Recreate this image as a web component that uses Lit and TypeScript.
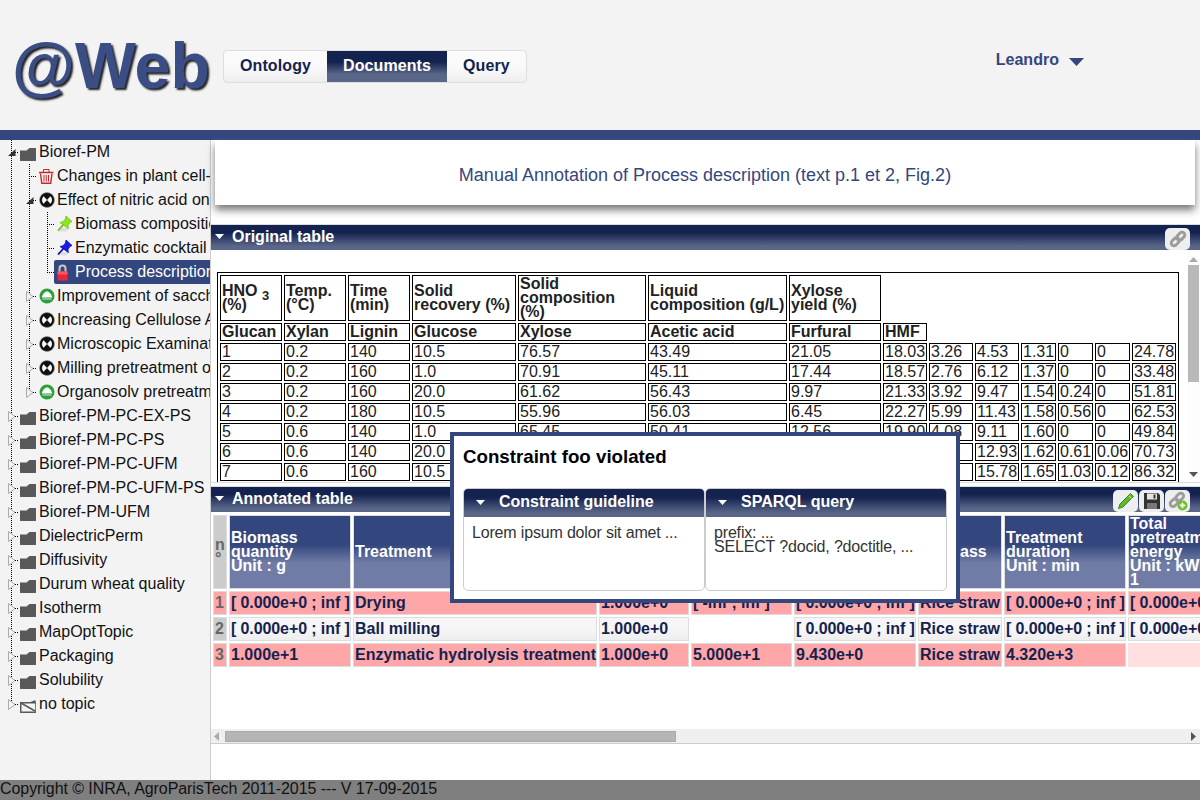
import { LitElement, html, css, svg } from "lit";
import { customElement } from "lit/decorators.js";

type Ico = "folder" | "empty" | "trash" | "hour" | "up" | "pinG" | "pinB" | "lock";
interface Node { d: number; t: string; i: Ico; a?: "open" | "closed"; end?: boolean; sel?: boolean; }

const TREE: Node[] = [
  { d: 0, t: "Bioref-PM", i: "folder", a: "open" },
  { d: 1, t: "Changes in plant cell-wall", i: "trash" },
  { d: 1, t: "Effect of nitric acid on", i: "hour", a: "open" },
  { d: 2, t: "Biomass composition", i: "pinG" },
  { d: 2, t: "Enzymatic cocktail composition", i: "pinB" },
  { d: 2, t: "Process description (text p.1 et 2, Fig.2)", i: "lock", end: true, sel: true },
  { d: 1, t: "Improvement of saccharification", i: "up", a: "closed" },
  { d: 1, t: "Increasing Cellulose Accessibility", i: "hour", a: "closed" },
  { d: 1, t: "Microscopic Examination", i: "hour", a: "closed" },
  { d: 1, t: "Milling pretreatment of", i: "hour", a: "closed" },
  { d: 1, t: "Organosolv pretreatment", i: "up", a: "closed", end: true },
  ...["Bioref-PM-PC-EX-PS", "Bioref-PM-PC-PS", "Bioref-PM-PC-UFM", "Bioref-PM-PC-UFM-PS", "Bioref-PM-UFM", "DielectricPerm", "Diffusivity", "Durum wheat quality", "Isotherm", "MapOptTopic", "Packaging", "Solubility"].map(
    (t): Node => ({ d: 0, t, i: "folder", a: "closed" })
  ),
  { d: 0, t: "no topic", i: "empty", a: "closed", end: true },
];

const ORIG_W = [62, 62, 62, 104, 128, 139, 92, 44, 44, 44, 35, 35, 35, 44];
const ORIG_ROWS = [
  ["1", "0.2", "140", "10.5", "76.57", "43.49", "21.05", "18.03", "3.26", "4.53", "1.31", "0", "0", "24.78"],
  ["2", "0.2", "160", "1.0", "70.91", "45.11", "17.44", "18.57", "2.76", "6.12", "1.37", "0", "0", "33.48"],
  ["3", "0.2", "160", "20.0", "61.62", "56.43", "9.97", "21.33", "3.92", "9.47", "1.54", "0.24", "0", "51.81"],
  ["4", "0.2", "180", "10.5", "55.96", "56.03", "6.45", "22.27", "5.99", "11.43", "1.58", "0.56", "0", "62.53"],
  ["5", "0.6", "140", "1.0", "65.45", "50.41", "12.56", "19.90", "4.08", "9.11", "1.60", "0", "0", "49.84"],
  ["6", "0.6", "140", "20.0", "", "", "", "", "", "12.93", "1.62", "0.61", "0.06", "70.73"],
  ["7", "0.6", "160", "10.5", "", "", "", "", "", "15.78", "1.65", "1.03", "0.12", "86.32"],
];
const ANNOT_W = [14, 122, 244, 90, 101, 122, 84, 122, 122];
const RANGE = "[ 0.000e+0 ; inf ]";
const ANNOT_ROWS: { n: string; cls: string; cells: string[] }[] = [
  { n: "1", cls: "bad", cells: [RANGE, "Drying", "1.000e+0", "[ -inf ; inf ]", RANGE, "Rice straw", RANGE, RANGE] },
  { n: "2", cls: "ok", cells: [RANGE, "Ball milling", "1.000e+0", "", RANGE, "Rice straw", RANGE, RANGE] },
  { n: "3", cls: "bad", cells: ["1.000e+1", "Enzymatic hydrolysis treatment", "1.000e+0", "5.000e+1", "9.430e+0", "Rice straw", "4.320e+3", ""] },
];

const caret = html`<svg class="caret" width="9" height="5" viewBox="0 0 9 5"><path d="M0 0H9L4.5 5Z" fill="#fff"/></svg>`;
const chain = svg`<g transform="rotate(-45 8 8)" fill="none" stroke="#9c9c9c" stroke-width="2.6"><rect x="0.5" y="5.5" width="8" height="5" rx="2.5"/><rect x="7.5" y="5.5" width="8" height="5" rx="2.5"/></g>`;
const icoChain = html`<svg width="18" height="18" viewBox="0 0 16 16">${chain}</svg>`;
const icoChainPlus = html`<svg width="20" height="20" viewBox="0 0 18 18">${chain}<circle cx="13" cy="13" r="4.5" fill="#6cc02c"/><path d="M10.500 13H15.500M13 10.500V15.500" stroke="#fff" stroke-width="1.6"/></svg>`;
const icoPencil = html`<svg width="18" height="18" viewBox="0 0 18 18"><path d="M13.5 1.5L16.5 4.5L6 15L1.5 16.5L3 12Z" fill="#62b82e" stroke="#3a8a1e" stroke-width="1"/><path d="M12 4L14.5 6.500" stroke="#c8eda0"/></svg>`;
const icoSave = html`<svg width="18" height="18" viewBox="0 0 18 18"><path d="M1 1H15L17 3V17H1Z" fill="#333"/><rect x="4" y="1.500" width="10" height="6" fill="#e4e4e4"/><rect x="10.500" y="2.500" width="2" height="4" fill="#333"/><rect x="4" y="11" width="10" height="6" fill="#777"/></svg>`;

function icon(i: Ico) {
  switch (i) {
    case "folder":
      return html`<svg class="folder" width="16" height="14" viewBox="0 0 16 14"><path d="M0 3.500H6.500L9.500 1H16V14H0Z" fill="#595959"/></svg>`;
    case "empty":
      return html`<svg class="folder" width="16" height="14" viewBox="0 0 16 14"><path d="M.75 3.750H16V13.250H.75Z" fill="none" stroke="#595959" stroke-width="1.500"/><path d="M1 4L15 12" stroke="#595959" stroke-width="1.500"/><path d="M9 3.500L15.500 1V4Z" fill="#595959"/></svg>`;
    case "trash":
      return html`<svg width="16" height="16" viewBox="0 0 16 16" fill="none" stroke="#c8282a"><path d="M0 4.500H14.500" stroke-width="1.500"/><path d="M4.500 4V1.500H10V4" /><path d="M1.500 5.500L2.800 15.300H11.700L13 5.500" stroke-width="1.400"/><path d="M5 7V13.500M7.250 7V13.500M9.500 7V13.500"/></svg>`;
    case "hour":
      return html`<svg width="16" height="16" viewBox="0 0 16 16"><circle cx="8" cy="8" r="7.500" fill="#111" stroke="#999" stroke-width=".6"/><circle cx="8" cy="8" r="5" fill="#fff"/><path d="M3 2.500H13L8 8L13 13.500H3L8 8Z" fill="#111"/></svg>`;
    case "up":
      return html`<svg width="16" height="16" viewBox="0 0 16 16"><circle cx="8" cy="8" r="7.500" fill="#2c9e3c"/><path d="M2.800 9.500C3.500 6 6 3.600 8 3.600S12.500 6 13.200 9.500Z" fill="#fff"/><path d="M3.500 11H12.500" stroke="#d8f0dc" stroke-width="1"/></svg>`;
    case "pinG":
    case "pinB": {
      const c = i === "pinG" ? "#8ee61e" : "#1a1ae6";
      const d = i === "pinG" ? "#6cc014" : "#0c0cb0";
      return html`<svg width="16" height="16" viewBox="0 0 16 16"><path d="M0 15.500L4 12H13L9 15.500Z" fill="#ddd"/><path d="M7 8L1 14.500" stroke="${d}" stroke-width="1.800"/><path d="M9 0L15 5.500L12.800 6.500L11 9.500L11.300 12.500L3 6.500L6 5.800L8.500 3Z" fill="${c}" stroke="${d}" stroke-width=".8"/></svg>`;
    }
    case "lock":
      return html`<svg width="16" height="17" viewBox="0 0 16 17"><path d="M2.500 8V4.500A3 3 0 0 1 8.500 4.500V8" fill="none" stroke="#c8c8c8" stroke-width="2"/><rect x="0.5" y="7.500" width="10" height="9" rx="1" fill="#e8283a"/><rect x="0.5" y="7.500" width="10" height="3" fill="#f56"/></svg>`;
  }
}

@customElement("app-root")
export class AppRoot extends LitElement {
  static styles = css`
    :host { display: flex; flex-direction: column; width: 1200px; height: 800px; overflow: hidden; position: relative; font-family: "Liberation Sans", Arial, sans-serif; font-size: 16px; color: #111; background: #fff; }
    .top { height: 130px; flex: none; background: #f3f3f3; display: flex; align-items: center; padding-left: 12px; box-sizing: border-box; }
    .logo { font-size: 64.5px; font-weight: 700; color: #3a4d85; text-shadow: 2px 2px 2px #222; width: 198px; line-height: 70px; white-space: nowrap; margin-top: 1px; }
    .nav { display: flex; margin-left: 13px; height: 33px; box-sizing: border-box; border: 1px solid #ddd; border-radius: 4px; background: linear-gradient(#fafafa 50%, #eee); margin-top: 2px; }
    .nav a { padding: 0 16px; line-height: 29px; font-weight: 700; color: #14224f; letter-spacing: 0.1px; }
    .nav a.on { color: #fff; background: linear-gradient(#14224f 35%, #5a6688 75%); }
    .user { margin-left: 469px; display: flex; align-items: center; gap: 10px; color: #34467e; font-weight: 700; margin-bottom: 10px; }
    .user svg { margin-top: 4px; }
    .bar { height: 10px; flex: none; background: #34467e; }
    .main { flex: 1; display: flex; min-height: 0; }
    .side { width: 210px; flex: none; background: #f3f3f3; border-right: 1px solid #ccc; overflow: hidden; }
    .row { display: flex; height: 24px; line-height: 24px; padding-left: 2px; white-space: nowrap; overflow: hidden; }
    .g, .c { flex: none; display: flex; align-items: center; box-sizing: border-box; --v: repeating-linear-gradient(#000 0 1px, transparent 1px 2px); --h: repeating-linear-gradient(90deg, #000 0 1px, transparent 1px 2px); }
    .g { width: 18px; background: var(--v) 9px 0 / 1px 24px no-repeat; }
    .c { width: 16px; background: var(--v) 9px 0 / 1px 24px no-repeat, var(--h) 9px 12px / 7px 1px no-repeat; }
    .c.end { background: var(--v) 9px 0 / 1px 13px no-repeat, var(--h) 9px 12px / 7px 1px no-repeat; }
    .tri { margin-left: 6px; flex: none; }
    .node { flex: 1; min-width: 0; display: flex; align-items: center; padding-left: 3px; gap: 2px; height: 24px; overflow: hidden; }
    .node svg { flex: none; }
    .node svg.folder { margin: 4px 1px 0 -1px; }
    .node.sel { background: #34467e; color: #fff; border-radius: 2px 0 0 2px; }
    .content { flex: 1; min-width: 0; display: flex; flex-direction: column; background: #fff; }
    .title { flex: none; height: 65px; margin: 0 5px 19px 4px; box-shadow: 0 5px 8px #777; display: flex; align-items: center; justify-content: center; font-size: 18px; color: #34467e; padding-top: 5px; box-sizing: border-box; background: #fff; }
    .ph { flex: none; height: 26px; box-sizing: border-box; border-top: 1px solid #ddd; padding-bottom: 2px; background: linear-gradient(#14224f 30%, #5a6688 85%); color: #fff; font-weight: 700; display: flex; align-items: center; padding-left: 4px; gap: 8px; }
    .ph .sp { flex: 1; }
    .btns { display: flex; gap: 1px; margin-right: 10px; align-self: flex-end; margin-bottom: -2px; }
    .btn { width: 25px; height: 22px; background: #eee; border-radius: 5px; display: flex; align-items: center; justify-content: center; }
    .pb1 { flex: none; height: 232px; display: flex; border-bottom: 1px solid #ddd; margin-bottom: 3px; }
    .oscroll { flex: 1; min-width: 0; overflow: hidden; padding: 22px 0 0 6px; box-sizing: border-box; }
    table { border-collapse: separate; border-spacing: 2px; table-layout: fixed; }
    .orig { width: 962px; border: 1px solid #000; color: #222; line-height: 14px; }
    .orig td, .orig th { border: 1px solid #000; padding: 1px; text-align: left; vertical-align: middle; white-space: nowrap; overflow: hidden; }
    .orig th { white-space: normal; font-weight: 700; }
    .orig td { height: 18px; box-sizing: border-box; }
    sub { font-size: 13px; line-height: 0; }
    .vbar { width: 13px; flex: none; display: flex; flex-direction: column; align-items: center; background: #fdfdfd; padding: 7px 0 5px; box-sizing: border-box; }
    .vthumb { width: 11px; height: 117px; background: #b8b8b8; margin: 3px 0 0; }
    .sp2 { flex: 1; }
    .pb2 { flex: none; height: 232px; display: flex; flex-direction: column; }
    .ascroll { flex: none; height: 217px; overflow: hidden; padding-top: 1px; box-sizing: border-box; }
    .annot { width: 1039px; line-height: 14px; font-weight: 700; color: #14224f; }
    .annot th, .annot td { padding: 1px; border: 1px solid #ddd; text-align: left; white-space: nowrap; overflow: hidden; box-sizing: border-box; }
    .annot th { height: 74px; color: #fff; background: linear-gradient(#34467e 40%, #707ca5 65%); vertical-align: middle; font-weight: 700; }
    .annot th.num { background: #ccc; color: #666; white-space: normal; }
    .annot td { height: 24px; }
    .annot td.rng { letter-spacing: -0.1px; }
    .annot td.bad { background: #ffa6a8; }
    .annot td.ok { background: linear-gradient(#f6f6f6 50%, #eee); }
    .annot td.none { background: #fff; border-color: #fff; }
    .annot td.soft { background: #ffdfdf; border-color: #ffdfdf; }
    .annot td.n { color: #666; }
    .annot td.n.ok { background: #ccc; }
    .hbar { flex: none; height: 15px; box-sizing: border-box; border-bottom: 1px solid #ccc; background: #efefef; display: flex; align-items: center; padding: 0 4px 0 3px; }
    .hthumb { width: 451px; height: 11px; box-sizing: border-box; background: #b5b5b5; border: 1px solid #aaa; margin-left: 6px; }
    .foot { height: 20px; flex: none; background: #7f7f7f; color: #111; line-height: 18px; white-space: nowrap; letter-spacing: -0.07px; }
    .modal { position: absolute; left: 450px; top: 432px; width: 510px; height: 171px; box-sizing: border-box; border: 4px solid #34467e; background: #fff; padding: 0 9px; }
    .modal h3 { font-size: 18.72px; margin: 10px 0 20px; line-height: 22px; color: #000; }
    .subs { display: flex; }
    .sub { width: 242px; height: 103px; box-sizing: border-box; border: 1px solid #ccc; border-radius: 5px; overflow: hidden; }
    .sh { height: 28px; box-sizing: border-box; padding-bottom: 2px; background: linear-gradient(#14224f 30%, #5a6688 85%); color: #fff; font-weight: 700; display: flex; align-items: center; padding-left: 12px; gap: 14px; }
    .sb { padding: 9px 8px 8px; line-height: 14px; color: #333; letter-spacing: -0.17px; }
  `;

  private renderRow(n: Node) {
    const guides = [];
    for (let k = 0; k < n.d; k++) guides.push(html`<span class="g"></span>`);
    return html`<div class="row">
      ${guides}<span class="c ${n.end ? "end" : ""}">
        ${n.a === "open"
          ? html`<svg class="tri" width="8" height="7" viewBox="0 0 8 7"><path d="M7.500 0V7H0Z" fill="#333"/></svg>`
          : n.a === "closed"
          ? html`<svg class="tri" width="8" height="11" viewBox="0 0 8 11"><path d="M.5 .5L7 5.500L.5 10.500Z" fill="#f3f3f3" stroke="#aaa"/></svg>`
          : ""}
      </span>
      <span class="node ${n.sel ? "sel" : ""}">${icon(n.i)}<span>${n.t}</span></span>
    </div>`;
  }

  render() {
    return html`
      <div class="top">
        <div class="logo">@Web</div>
        <div class="nav"><a>Ontology</a><a class="on">Documents</a><a>Query</a></div>
        <div class="user">Leandro <svg width="15" height="8" viewBox="0 0 15 8"><path d="M0 0H15L7.500 8Z" fill="#34467e"/></svg></div>
      </div>
      <div class="bar"></div>
      <div class="main">
        <div class="side">${TREE.map((n) => this.renderRow(n))}</div>
        <div class="content">
          <div class="title">Manual Annotation of Process description (text p.1 et 2, Fig.2)</div>
          <div class="ph">${caret}<span>Original table</span><span class="sp"></span>
            <div class="btns"><div class="btn">${icoChain}</div></div>
          </div>
          <div class="pb1">
            <div class="oscroll">
              <table class="orig">
                <colgroup>${ORIG_W.map((w) => html`<col style="width:${w}px" />`)}</colgroup>
                <tr>
                  <th>HNO <sub>3</sub> (%)</th><th>Temp. (°C)</th><th>Time (min)</th><th>Solid recovery (%)</th><th>Solid composition (%)</th><th>Liquid composition (g/L)</th><th>Xylose yield (%)</th>
                </tr>
                <tr>
                  ${["Glucan", "Xylan", "Lignin", "Glucose", "Xylose", "Acetic acid", "Furfural", "HMF"].map((t) => html`<th>${t}</th>`)}
                </tr>
                ${ORIG_ROWS.map((r) => html`<tr>${r.map((c) => html`<td>${c}</td>`)}</tr>`)}
              </table>
            </div>
            <div class="vbar">
              <svg width="9" height="5" viewBox="0 0 9 5"><path d="M0 5H9L4.500 0Z" fill="#aaa"/></svg>
              <div class="vthumb"></div>
              <div class="sp2"></div>
              <svg width="9" height="5" viewBox="0 0 9 5"><path d="M0 0H9L4.500 5Z" fill="#555"/></svg>
            </div>
          </div>
          <div class="ph">${caret}<span>Annotated table</span><span class="sp"></span>
            <div class="btns">
              <div class="btn">${icoPencil}</div><div class="btn">${icoSave}</div><div class="btn">${icoChainPlus}</div>
            </div>
          </div>
          <div class="pb2">
            <div class="ascroll">
              <table class="annot">
                <colgroup>${ANNOT_W.map((w) => html`<col style="width:${w}px" />`)}</colgroup>
                <tr>
                  <th class="num">n °</th>
                  <th>Biomass<br />quantity<br />Unit : g</th>
                  <th>Treatment</th>
                  <th></th><th></th><th></th>
                  <th>Biomass</th>
                  <th>Treatment<br />duration<br />Unit : min</th>
                  <th>Total<br />pretreatment<br />energy<br />Unit : kW<br />1</th>
                </tr>
                ${ANNOT_ROWS.map(
                  (r) => html`<tr>
                    <td class="n ${r.cls}">${r.n}</td>
                    ${r.cells.map((c, idx) => {
                      const cls = c ? r.cls : idx === r.cells.length - 1 ? "soft" : "none";
                      return html`<td class="${cls} ${c.startsWith("[") ? "rng" : ""}">${c}</td>`;
                    })}
                  </tr>`
                )}
              </table>
            </div>
            <div class="hbar">
              <svg width="5" height="9" viewBox="0 0 5 9"><path d="M5 0V9L0 4.500Z" fill="#aaa"/></svg>
              <div class="hthumb"></div>
              <span class="sp2"></span>
              <svg width="5" height="9" viewBox="0 0 5 9"><path d="M0 0V9L5 4.500Z" fill="#555"/></svg>
            </div>
          </div>
        </div>
      </div>
      <div class="foot">Copyright © INRA, AgroParisTech 2011-2015 --- V 17-09-2015</div>
      <div class="modal">
        <h3>Constraint foo violated</h3>
        <div class="subs">
          <div class="sub"><div class="sh">${caret}<span>Constraint guideline</span></div><div class="sb">Lorem ipsum dolor sit amet ...</div></div>
          <div class="sub"><div class="sh">${caret}<span>SPARQL query</span></div><div class="sb">prefix: ...<br />SELECT ?docid, ?doctitle, ...</div></div>
        </div>
      </div>
    `;
  }
}
